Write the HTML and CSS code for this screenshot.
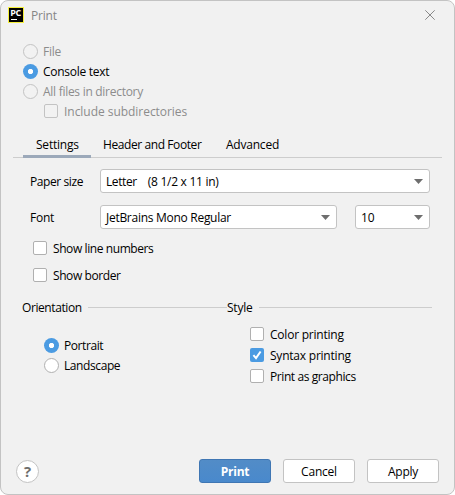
FILE: index.html
```html
<!DOCTYPE html>
<html lang="en">
<head>
<meta charset="utf-8">
<title>Print</title>
<link rel="stylesheet" href="styles.css">
</head>
<body>
<main class="dialog">
  <header class="titlebar">
    <svg class="logo" width="16" height="16" viewBox="0 0 16 16">
      <rect x=".5" y=".5" width="15" height="15" fill="#000" stroke="#f6f03c"/>
      <text class="logo-text" x="2.3" y="9" textLength="11">PC</text>
      <rect x="3" y="12" width="6" height="1" fill="#fff"/>
    </svg>
    <h1 class="title"><span>Print</span></h1>
    <svg class="close" width="10" height="10" viewBox="0 0 10 10"><path d="M.3.3l9.4 9.4M9.7.3L.3 9.7" stroke="#888" fill="none"/></svg>
  </header>

  <section class="source">
    <label class="row disabled"><i class="radio"></i><span>File</span></label>
    <label class="row"><i class="radio on"></i><span class="snug">Console text</span></label>
    <label class="row disabled"><i class="radio"></i><span class="snug">All files in directory</span></label>
    <label class="row disabled nested"><i class="check"></i><span class="loose">Include subdirectories</span></label>
  </section>

  <nav class="tabs">
    <div class="tab active"><span>Settings</span></div>
    <div class="tab"><span class="tight">Header and Footer</span></div>
    <div class="tab"><span>Advanced</span></div>
  </nav>

  <section class="fields">
    <span class="tight">Paper size</span>
    <div class="combo wide"><span class="tight">Letter</span><span class="snug">(8 1/2 x 11 in)</span><svg class="arrow" width="9" height="5"><path d="M0 0h9L4.5 5z"/></svg></div>
    <span>Font</span>
    <div class="combo"><span class="snug">JetBrains Mono Regular</span><svg class="arrow" width="9" height="5"><path d="M0 0h9L4.5 5z"/></svg></div>
    <div class="combo"><span>10</span><svg class="arrow" width="9" height="5"><path d="M0 0h9L4.5 5z"/></svg></div>
  </section>

  <section class="toggles">
    <label class="row"><i class="check"></i><span class="tight">Show line numbers</span></label>
    <label class="row"><i class="check"></i><span class="tight">Show border</span></label>
  </section>

  <section class="groups">
    <div class="group">
      <h2 class="group-title"><span class="tight">Orientation</span></h2>
      <div class="orientation">
        <label class="row"><i class="radio on"></i><span class="tight">Portrait</span></label>
        <label class="row"><i class="radio"></i><span class="tight">Landscape</span></label>
      </div>
    </div>
    <div class="group">
      <h2 class="group-title"><span>Style</span></h2>
      <div class="style">
        <label class="row"><i class="check"></i><span>Color printing</span></label>
        <label class="row"><i class="check on"><svg width="14" height="14"><path d="M3.4 7.2l2.6 2.9 4.6-6.6" fill="none" stroke="#fff" stroke-width="2"/></svg></i><span>Syntax printing</span></label>
        <label class="row"><i class="check"></i><span class="tight">Print as graphics</span></label>
      </div>
    </div>
  </section>

  <footer class="actions">
    <div class="help">?</div>
    <div class="button primary"><span>Print</span></div>
    <div class="button"><span>Cancel</span></div>
    <div class="button"><span>Apply</span></div>
  </footer>
</main>
</body>
</html>
```
FILE: styles.css
```css
* { box-sizing: border-box; }
body {
  margin: 0;
  background: #fff;
  font: 12px/16px "Open Sans", "Noto Sans", sans-serif;
  letter-spacing: -0.22px;
  color: #000;
}
.dialog {
  width: 455px;
  height: 495px;
  display: flex;
  flex-direction: column;
  background: #f1f1f1;
  border: 1px solid #c3c3c3;
  border-radius: 8px;
  overflow: hidden;
}
h1, h2 { margin: 0; font: inherit; }
span { white-space: pre; }
.tight { letter-spacing: -0.41px; }
.snug { letter-spacing: -0.28px; }
.loose { letter-spacing: -0.04px; }

.titlebar {
  display: flex;
  align-items: center;
  height: 28px;
  padding: 0 19px 0 7px;
}
.logo { display: block; }
.logo-text { font: 700 9px "Open Sans", sans-serif; letter-spacing: 0; fill: #fff; }
.title { flex: 1; padding: 2px 0 0 7px; color: #858585; }
.close { display: block; }

.row { display: flex; align-items: center; height: 20px; padding-top: 1px; gap: 5px; }
.row span { padding-top: 1px; }
.row.disabled { color: #8c8c8c; }
.radio {
  width: 15px;
  height: 15px;
  flex: none;
  border: 1px solid #b0b0b0;
  border-radius: 50%;
  background: #fff;
}
.radio.on {
  border: 0;
  background: radial-gradient(circle, #fff 2.2px, #4b9be2 3px);
}
.check {
  width: 14px;
  height: 14px;
  flex: none;
  margin-bottom: 1px;
  border: 1px solid #b0b0b0;
  border-radius: 2px;
  background: #fff;
}
.check + span { margin-left: 1px; }
.check.on { border: 0; background: #4b9be2; }
.check.on svg { display: block; }
.disabled .radio, .disabled .check { border-color: #c3c3c3; background: #f2f2f2; }

.source { padding: 12px 0 0 22px; }
.nested { margin-left: 21px; }

.tabs {
  display: flex;
  height: 25px;
  margin: 12px 12px 0;
  padding-left: 10px;
  background: linear-gradient(#cdcdcd, #cdcdcd) 0 24px / 100% 1px no-repeat;
}
.tab { height: 25px; padding: 4px 12px 0; }
.tab:nth-child(1) { width: 68px; padding-left: 13px; }
.tab:nth-child(2) { width: 123px; }
.tab.active { border-bottom: 3px solid #9ca9ba; }

.fields {
  display: grid;
  grid-template-columns: 70px 237px 18px 75px;
  grid-template-rows: 24px 24px;
  row-gap: 12px;
  align-items: center;
  margin: 11px 0 0 29px;
}
.fields > span { padding-top: 2px; }
.fields .combo:last-child { grid-column: 4; }
.combo {
  display: flex;
  align-items: center;
  height: 24px;
  padding: 1px 6px 0 5px;
  border: 1px solid #c3c3c3;
  border-radius: 3px;
  background: #fff;
}
.combo span { padding-top: 1px; }
.combo.wide { grid-column: 2 / 5; gap: 11px; }
.arrow { margin-left: auto; fill: #6e6e6e; }

.toggles { display: grid; row-gap: 7px; padding: 9px 0 0 32px; }

.groups {
  display: grid;
  grid-template-columns: 205px 205px;
  margin: 15px 0 0 21px;
}
.group-title { display: flex; align-items: center; gap: 6px; height: 15px; }
.group-title span { padding-top: 1px; }
.group-title::after { content: ""; flex: 1; height: 1px; background: #cdcdcd; }
.orientation { padding: 20px 0 0 22px; }
.style { display: grid; row-gap: 1px; padding: 9px 0 0 23px; }

.actions {
  display: flex;
  align-items: flex-end;
  gap: 12px;
  margin: auto 15px 11px 15px;
}
.help {
  width: 23px;
  height: 23px;
  margin-right: auto;
  border: 1px solid #c3c3c3;
  border-radius: 50%;
  background: #fff;
  color: #6e6e6e;
  font: 700 15px/21px "Open Sans", sans-serif;
  letter-spacing: 0;
  text-align: center;
}
.button {
  width: 72px;
  height: 24px;
  border: 1px solid #c3c3c3;
  border-radius: 3px;
  background: #fff;
  line-height: 24px;
  text-align: center;
}
.button.primary {
  border-color: #3f76b3;
  background: linear-gradient(#528cc7, #4989cc);
  color: #fff;
  font-weight: 700;
}
```
